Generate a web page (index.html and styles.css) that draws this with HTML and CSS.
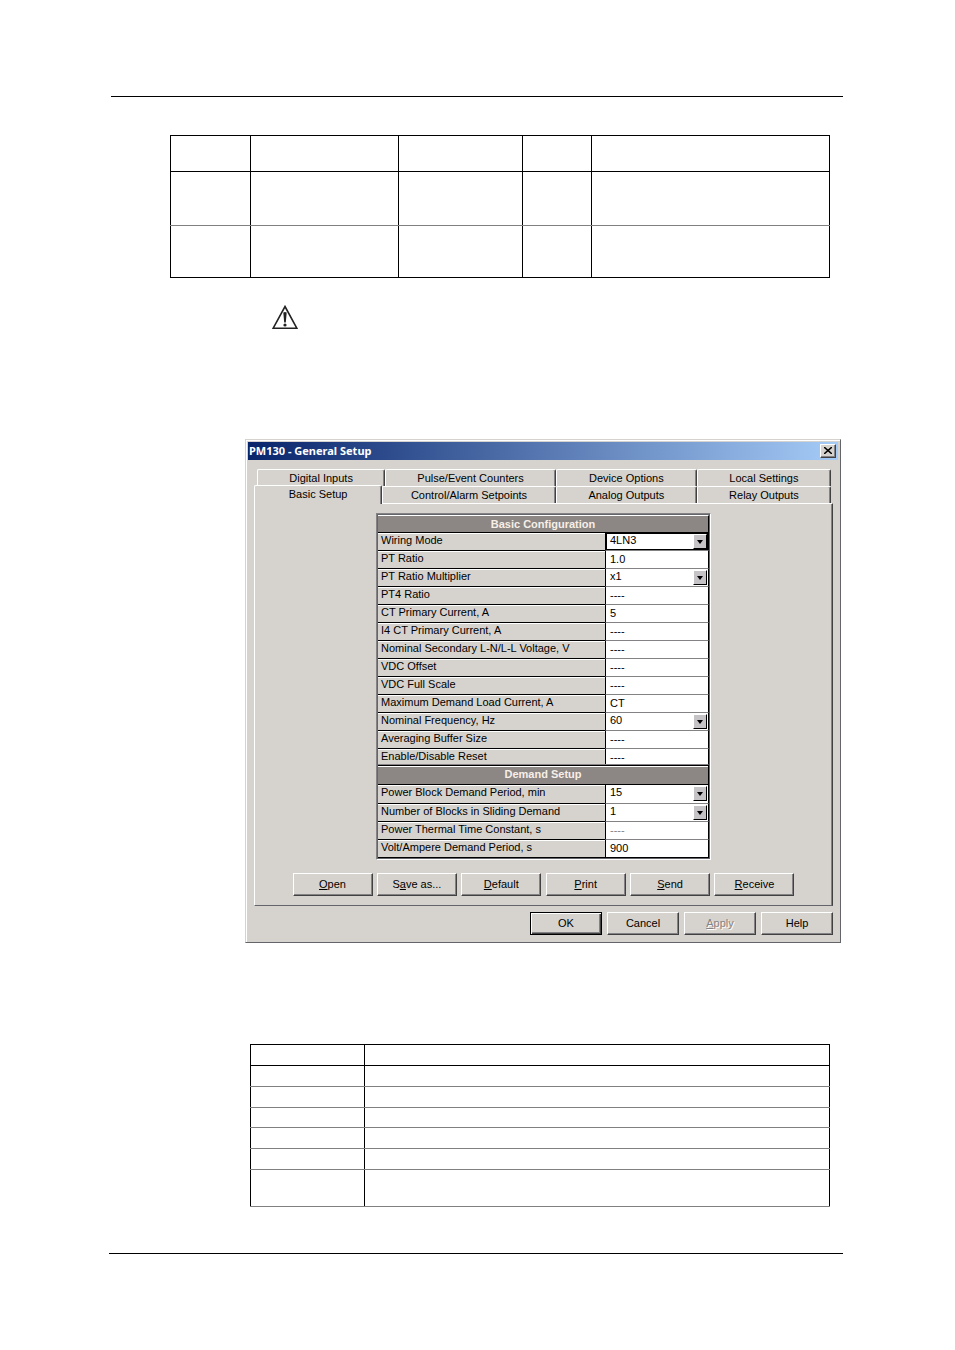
FILE: index.html
```html
<!DOCTYPE html>
<html lang="en">
<head>
    <meta charset="UTF-8">
    <title>PM130 - General Setup</title>
    <link rel="stylesheet" href="styles.css">
</head>
<body>
    <div class="page">
        <table class="doc-table menu-table">
            <colgroup><col class="col-a"><col class="col-b"><col class="col-c"><col class="col-d"><col></colgroup>
            <thead>
                <tr><th></th><th></th><th></th><th></th><th></th></tr>
            </thead>
            <tbody>
                <tr><td></td><td></td><td></td><td></td><td></td></tr>
                <tr><td></td><td></td><td></td><td></td><td></td></tr>
            </tbody>
        </table>

        <svg class="warning" viewBox="0 0 26 25" width="26" height="25">
            <path d="M13 1.5 L24.8 23.2 H1.2 Z" fill="none" stroke="#222" stroke-width="1.6"/>
            <path d="M11.3 7.5 Q13 6.3 14.7 7.5 L13.8 17.5 H12.2 Z" fill="#222"/>
            <circle cx="13" cy="20" r="1.6" fill="#222"/>
        </svg>

        <form class="dialog" onsubmit="return false">
            <div class="title-bar">
                <span>PM130 - General Setup</span>
                <button class="close-button" type="button" aria-label="Close">
                    <svg viewBox="0 0 8 7" width="8" height="7"><path d="M0 0L8 7M8 0L0 7" fill="none" stroke="black" stroke-width="1.5"/></svg>
                </button>
            </div>

            <div class="tabs">
                <div class="tab-row back-row">
                    <button class="tab tab-1" type="button">Digital Inputs</button>
                    <button class="tab tab-2" type="button">Pulse/Event Counters</button>
                    <button class="tab tab-3" type="button">Device Options</button>
                    <button class="tab tab-4" type="button">Local Settings</button>
                </div>
                <div class="tab-row front-row">
                    <button class="tab tab-1 active" type="button">Basic Setup</button>
                    <button class="tab tab-2" type="button">Control/Alarm Setpoints</button>
                    <button class="tab tab-3" type="button">Analog Outputs</button>
                    <button class="tab tab-4" type="button">Relay Outputs</button>
                </div>
            </div>

            <div class="panel">
                <table class="grid">
                    <colgroup><col><col class="col-value"></colgroup>
                    <tbody>
                        <tr><th class="section" colspan="2">Basic Configuration</th></tr>
                        <tr>
                            <th><label for="wiring">Wiring Mode</label></th>
                            <td class="focused"><div class="combo"><select id="wiring"><option>4LN3</option></select><span class="arrow"></span></div></td>
                        </tr>
                        <tr>
                            <th><label for="pt">PT Ratio</label></th>
                            <td><input id="pt" type="text" value="1.0"></td>
                        </tr>
                        <tr>
                            <th><label for="ptmult">PT Ratio Multiplier</label></th>
                            <td><div class="combo"><select id="ptmult"><option>x1</option></select><span class="arrow"></span></div></td>
                        </tr>
                        <tr>
                            <th><label for="pt4">PT4 Ratio</label></th>
                            <td><input id="pt4" type="text" value="----"></td>
                        </tr>
                        <tr>
                            <th><label for="ct">CT Primary Current, A</label></th>
                            <td><input id="ct" type="text" value="5"></td>
                        </tr>
                        <tr>
                            <th><label for="i4ct">I4 CT Primary Current, A</label></th>
                            <td><input id="i4ct" type="text" value="----"></td>
                        </tr>
                        <tr>
                            <th><label for="voltage">Nominal Secondary L-N/L-L Voltage, V</label></th>
                            <td><input id="voltage" type="text" value="----"></td>
                        </tr>
                        <tr>
                            <th><label for="vdcoffset">VDC Offset</label></th>
                            <td><input id="vdcoffset" type="text" value="----"></td>
                        </tr>
                        <tr>
                            <th><label for="vdcscale">VDC Full Scale</label></th>
                            <td><input id="vdcscale" type="text" value="----"></td>
                        </tr>
                        <tr>
                            <th><label for="maxload">Maximum Demand Load Current, A</label></th>
                            <td><input id="maxload" type="text" value="CT"></td>
                        </tr>
                        <tr>
                            <th><label for="freq">Nominal Frequency, Hz</label></th>
                            <td><div class="combo"><select id="freq"><option>60</option></select><span class="arrow"></span></div></td>
                        </tr>
                        <tr>
                            <th><label for="buffer">Averaging Buffer Size</label></th>
                            <td><input id="buffer" type="text" value="----"></td>
                        </tr>
                        <tr class="last">
                            <th><label for="reset">Enable/Disable Reset</label></th>
                            <td><input id="reset" type="text" value="----"></td>
                        </tr>
                    </tbody>
                    <tbody class="demand">
                        <tr><th class="section" colspan="2">Demand Setup</th></tr>
                        <tr>
                            <th><label for="block">Power Block Demand Period, min</label></th>
                            <td><div class="combo"><select id="block"><option>15</option></select><span class="arrow"></span></div></td>
                        </tr>
                        <tr>
                            <th><label for="blocks">Number of Blocks in Sliding Demand</label></th>
                            <td><div class="combo"><select id="blocks"><option>1</option></select><span class="arrow"></span></div></td>
                        </tr>
                        <tr>
                            <th><label for="thermal">Power Thermal Time Constant, s</label></th>
                            <td><input id="thermal" class="muted" type="text" value="----"></td>
                        </tr>
                        <tr>
                            <th><label for="ampere">Volt/Ampere Demand Period, s</label></th>
                            <td><input id="ampere" type="text" value="900"></td>
                        </tr>
                    </tbody>
                </table>

                <div class="file-buttons">
                    <button class="btn" type="button"><u>O</u>pen</button>
                    <button class="btn" type="button">S<u>a</u>ve as...</button>
                    <button class="btn" type="button"><u>D</u>efault</button>
                    <button class="btn" type="button"><u>P</u>rint</button>
                    <button class="btn" type="button"><u>S</u>end</button>
                    <button class="btn" type="button"><u>R</u>eceive</button>
                </div>
            </div>

            <div class="dialog-buttons">
                <button class="btn default" type="submit">OK</button>
                <button class="btn" type="button">Cancel</button>
                <button class="btn" type="button" disabled><u>A</u>pply</button>
                <button class="btn" type="button">Help</button>
            </div>
        </form>

        <table class="doc-table modes-table">
            <colgroup><col class="col-mode"><col></colgroup>
            <thead>
                <tr><th></th><th></th></tr>
            </thead>
            <tbody>
                <tr><td></td><td></td></tr>
                <tr><td></td><td></td></tr>
                <tr class="short"><td></td><td></td></tr>
                <tr><td></td><td></td></tr>
                <tr><td></td><td></td></tr>
                <tr class="tall"><td></td><td></td></tr>
            </tbody>
        </table>
    </div>
    <hr class="footer-rule">
</body>
</html>
```

FILE: styles.css
```css
* {
    box-sizing: border-box;
}

body {
    margin: 0;
    padding: 96px 112px 96px 109px;
    background: white;
    color: black;
    font-family: "Liberation Sans", Arial, sans-serif;
    font-size: 11px;
}

button, input, select {
    font: inherit;
    color: inherit;
    margin: 0;
    padding: 0;
    border: none;
    border-radius: 0;
}

.page {
    margin-left: 2px;
    border-top: 1px solid black;
    padding: 38px 13px 0 59px;
}

/* document tables */
.doc-table {
    width: 100%;
    table-layout: fixed;
    border-collapse: collapse;
}

.doc-table th,
.doc-table td {
    padding: 0;
    border: 1px solid black;
}

.doc-table tbody tr + tr td {
    border-top-color: #808080;
}

.doc-table tbody tr:not(:last-child) td {
    border-bottom-color: #808080;
}

.menu-table th {
    height: 36px;
}

.menu-table td {
    height: 54px;
}

.menu-table tr:last-child td {
    height: 52px;
}

.col-a { width: 80px; }
.col-b { width: 148px; }
.col-c { width: 124px; }
.col-d { width: 69px; }

.warning {
    display: block;
    margin: 27px 0 109px 102px;
}

.modes-table {
    width: calc(100% - 80px);
    margin: 101px 0 0 80px;
}

.modes-table th,
.modes-table td {
    height: 21px;
}

.modes-table .short td {
    height: 20px;
}

.modes-table .tall td {
    height: 37px;
    border-bottom-color: #808080;
}

.col-mode { width: 114px; }

.footer-rule {
    margin: 46px 0 0;
    border: none;
    border-top: 1px solid black;
}

/* dialog */
.dialog {
    margin: 0 -11px 0 75px;
    padding: 2px;
    background: #d6d3ce;
    border: 1px solid #d6d3ce;
    border-right-color: #63656b;
    border-bottom-color: #63656b;
    box-shadow: inset 1px 1px white;
}

.title-bar {
    display: flex;
    align-items: center;
    justify-content: space-between;
    height: 18px;
    padding: 0 2px 1px 1px;
    background: linear-gradient(to right, #08246b, #a5cbf7);
    color: white;
    font-family: "Noto Sans", Tahoma, sans-serif;
    font-weight: bold;
}

.close-button {
    display: flex;
    align-items: center;
    justify-content: center;
    width: 16px;
    height: 14px;
    background: #d6d3ce;
    border: 1px solid white;
    border-right-color: #424142;
    border-bottom-color: #424142;
    box-shadow: inset -1px -1px #848284;
}

.tabs {
    margin: 9px 7px 0 6px;
}

.tab-row {
    display: flex;
}

.back-row {
    padding: 0 0 0 3px;
}

.tab {
    height: 17px;
    background: #d6d3ce;
    border-top: 1px solid white;
    border-left: 1px solid white;
    border-right: 1px solid #424142;
    box-shadow: inset -1px 0 #848284;
    border-radius: 2px 2px 0 0;
}

.tab-1 { flex: 128 0 0; }
.tab-2 { flex: 171 0 0; }
.tab-3 { flex: 141 0 0; }
.tab-4 { flex: 134 0 0; }

.tab.active {
    z-index: 1;
    height: 19px;
    margin: -1px 0 -1px;
    padding-bottom: 2px;
}

.front-row .tab-2 {
    flex-grow: 174;
}

.panel {
    margin: 0 5px 0 6px;
    padding: 9px 0;
    border: 1px solid white;
    border-right: 1px solid #424142;
    border-bottom: 1px solid #63656b;
    box-shadow: inset -1px 0 #848284;
}

/* settings grid */
.grid {
    width: 335px;
    margin: 0 auto 13px;
    table-layout: fixed;
    border-collapse: separate;
    border-spacing: 0;
    border: 1px solid #848284;
    border-right-color: white;
    border-bottom-color: white;
    outline: 1px solid #63656b;
    outline-offset: -2px;
    padding: 1px;
    line-height: 13px;
}

.col-value { width: 104px; }

.grid th,
.grid td {
    height: 18px;
    padding: 0;
    font-weight: normal;
    text-align: left;
    vertical-align: top;
}

.grid th {
    padding-left: 3px;
    border-top: 1px solid white;
    border-bottom: 1px solid black;
}

.grid td {
    background: white;
    border-left: 1px solid black;
    border-right: 1px solid black;
    border-bottom: 1px solid #848284;
}

.grid .section {
    padding: 0;
    background: #8c8684;
    border-right: 1px solid black;
    color: #f7efe7;
    font-weight: bold;
    line-height: 16px;
    text-align: center;
}

.grid .last th,
.grid .last td {
    height: 15px;
    border-bottom: none;
}

.demand .section {
    height: 21px;
    border-top: 1px solid #848284;
    box-shadow: inset 0 1px black, inset 0 2px white;
    line-height: 19px;
}

.demand tr:nth-child(2) th,
.demand tr:nth-child(2) td {
    height: 19px;
}

.demand tr:last-child td {
    border-bottom-color: black;
}

.grid input,
.grid select {
    display: block;
    width: 100%;
    height: 15px;
    padding-left: 4px;
    background: transparent;
    appearance: none;
    outline: none;
}

.grid input.muted {
    color: #848284;
}

.combo {
    display: grid;
    height: 17px;
}

.combo select,
.combo .arrow {
    grid-area: 1 / 1;
}

.combo .arrow {
    display: flex;
    align-items: center;
    justify-content: center;
    justify-self: end;
    width: 14px;
    height: 15px;
    margin: 1px 1px 0 0;
    background: #c6c3c6;
    border: 1px solid white;
    border-right-color: black;
    border-bottom-color: black;
    pointer-events: none;
}

.combo .arrow::before {
    content: "";
    border: 3px solid transparent;
    border-top: 4px solid black;
    border-bottom: none;
}

.focused .combo {
    box-shadow: inset 0 1px black, inset 1px 0 black, inset -1px -1px black;
}

/* push buttons */
.btn {
    height: 23px;
    padding-bottom: 1px;
    background: #d6d3ce;
    border: 1px solid white;
    border-right-color: #424142;
    border-bottom-color: #424142;
    box-shadow: inset -1px -1px #848284;
}

.btn:disabled {
    color: #848284;
    text-shadow: 1px 1px white;
}

.btn.default {
    border-color: black;
    box-shadow: inset 1px 1px white, inset -1px -1px #424142, inset -2px -2px #848284;
}

.file-buttons {
    display: flex;
    justify-content: space-between;
    width: 502px;
    margin: 0 auto;
}

.file-buttons .btn {
    width: 80px;
}

.dialog-buttons {
    display: flex;
    justify-content: flex-end;
    gap: 5px;
    padding: 6px 5px 5px;
}

.dialog-buttons .btn {
    width: 72px;
}
```
